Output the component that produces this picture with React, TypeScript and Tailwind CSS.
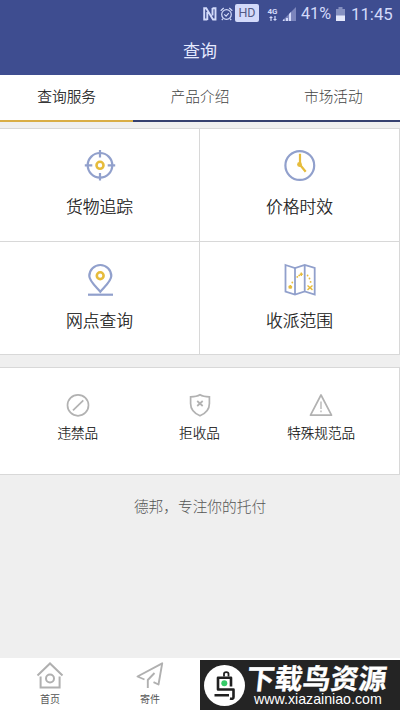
import type { ReactNode } from "react";

// Ícones desenhados à mão, todos com 1 unidade = 1px.
function TargetIcon() {
  return (
    <svg className="w-8 h-[34px]" viewBox="0 0 32 34" fill="none">
      <circle cx="16" cy="16.3" r="12.3" stroke="#91a0cc" strokeWidth="2.2" />
      <path d="M16 1v7.500M16 24v7.500M.8 16.300h7.500M23.700 16.300h7.500" stroke="#91a0cc" strokeWidth="2.200" />
      <circle cx="16" cy="16.3" r="3.5" stroke="#e6bc3c" strokeWidth="2.6" />
    </svg>
  );
}

function ClockIcon() {
  return (
    <svg className="w-8 h-[34px]" viewBox="0 0 32 34" fill="none">
      <circle cx="15.8" cy="16.5" r="14.4" stroke="#91a0cc" strokeWidth="2.200" />
      <path d="M16 4.800v11l5.700 7" stroke="#e6bc3c" strokeWidth="2.200" />
      <circle cx="15.500" cy="15.500" r="2.400" fill="#e6bc3c" />
    </svg>
  );
}

function PinIcon() {
  return (
    <svg className="w-8 h-[34px]" viewBox="0 0 32 34" fill="none">
      <path
        d="M16.300 28.700C12 23.700 5.300 18 5.300 13a11 11 0 0 1 22 0c0 5-6.700 10.700-11 15.700Z"
        stroke="#91a0cc"
        strokeWidth="2.200"
      />
      <circle cx="16.200" cy="12.700" r="3.400" stroke="#e6bc3c" strokeWidth="2.600" />
      <path d="M4 31.700h25" stroke="#91a0cc" strokeWidth="2.200" />
    </svg>
  );
}

function MapIcon() {
  return (
    <svg className="w-8 h-[34px]" viewBox="0 0 32 34" fill="none">
      <path
        d="M1.500 2 11 5l9.700-3 10 3v26.500l-10-3-9.700 3-9.500-3ZM11 5v26.500M20.700 2v26.500"
        stroke="#91a0cc"
        strokeWidth="1.800"
      />
      <path
        d="M6.300 22v3.800M4.600 23.100l3.400 2M8 23.100l-3.400 2M23.500 22.500l5 4.400M28.500 22.500l-5 4.400M17.300 9.500v3.400M15.800 11.200h3"
        stroke="#e6bc3c"
        strokeWidth="1.400"
      />
      <path
        d="M8.300 19.500v.1M13.300 13.800v.1M15.200 12.300v.1M23.600 12.500v.1M25.500 15.500v.1M26.600 18.800v.1"
        stroke="#e6bc3c"
        strokeWidth="1.800"
        strokeLinecap="round"
      />
    </svg>
  );
}

function ForbidIcon() {
  return (
    <svg className="w-6 h-6" viewBox="0 0 24 24" fill="none" stroke="#b2b2b2" strokeWidth="1.700">
      <circle cx="12" cy="12.300" r="10.500" />
      <path d="M7 17.300 17.300 7.300" />
    </svg>
  );
}

function ShieldIcon() {
  return (
    <svg className="w-6 h-6" viewBox="0 0 24 24" fill="none" stroke="#b2b2b2" strokeWidth="1.700">
      <path d="M12 1.700c3 1.800 6 2 9.400 2.100v6.800c0 6-4 10-9.400 12.200C6.600 20.600 2.600 16.600 2.600 10.600V3.800C6 3.700 9 3.500 12 1.700Z" />
      <path d="m9.200 8 5.500 5M14.700 8l-5.500 5" />
    </svg>
  );
}

function WarnIcon() {
  return (
    <svg className="w-6 h-6" viewBox="0 0 24 24" fill="none" stroke="#b2b2b2" strokeWidth="1.700" strokeLinejoin="round">
      <path d="M12 2 22.500 22.200h-21Z" />
      <path d="M12 8.500v7.500M12 17.500v1.800" strokeWidth="1.300" />
    </svg>
  );
}

function HomeIcon() {
  return (
    <svg className="w-7 h-7" viewBox="0 0 28 28" fill="none" stroke="#b0b0b0" strokeWidth="2">
      <path d="m1.500 14.500 12.500-12 12.500 12M4.600 15.500v11h19v-11" />
      <circle cx="14" cy="17.500" r="4" />
    </svg>
  );
}

function SendIcon() {
  return (
    <svg className="w-7 h-7" viewBox="0 0 28 28" fill="none" stroke="#b0b0b0" strokeWidth="1.900" strokeLinejoin="round">
      <path d="M8.500 18.500 1.500 15.500 26.200 2.300 22.500 23.500 17.500 21.200M18.500 12 11.800 19v8" />
    </svg>
  );
}

const TABS = ["查询服务", "产品介绍", "市场活动"];

const SERVICES: { label: string; icon: ReactNode }[] = [
  { label: "货物追踪", icon: <TargetIcon /> },
  { label: "价格时效", icon: <ClockIcon /> },
  { label: "网点查询", icon: <PinIcon /> },
  { label: "收派范围", icon: <MapIcon /> },
];

const RULES: { label: string; icon: ReactNode }[] = [
  { label: "违禁品", icon: <ForbidIcon /> },
  { label: "拒收品", icon: <ShieldIcon /> },
  { label: "特殊规范品", icon: <WarnIcon /> },
];

function StatusBar() {
  return (
    <div className="flex h-7 items-center justify-end pr-[7px] font-[Roboto,sans-serif] text-[#d3dafa]">
      <svg className="w-[14px] h-[14px]" viewBox="0 0 14 14" fill="none" stroke="currentColor" strokeWidth="1.900">
        <path d="M4.300 12.500H1.200V1.200h2L10 12.500h2.500V1.200H9.500M4.300 5v8M9.500 1v7.500" />
      </svg>
      <svg className="ml-[3px] w-[13px] h-[14px]" viewBox="0 0 13 14" fill="none" stroke="currentColor" strokeWidth="1.200">
        <circle cx="6.500" cy="7.500" r="4.800" />
        <path d="M.7 3.700 3.700 1M12.300 3.700l-3-2.700M4.300 7.300l1.800 1.800 2.700-3M3 11.700 1.800 13M10 11.700l1.200 1.300" />
      </svg>
      <span className="ml-[2px] mt-[-2px] flex h-[18px] w-[24px] items-center justify-center rounded-[2px] bg-[#d3dafa] text-[12.500px] text-[#535a84]">
        HD
      </span>
      <div className="ml-2 flex w-[11px] flex-col items-center">
        <span className="text-[8px] font-bold leading-[8px]">4G</span>
        <svg className="w-2 h-[5px]" viewBox="0 0 8 5" fill="currentColor">
          <path d="M2 0 4 2H2.600v3H1.400V2H0ZM6 5 4 3h1.400V0h1.200v3H8Z" />
        </svg>
      </div>
      <svg className="ml-1 w-[14px] h-[14px]" viewBox="0 0 14 14">
        <path d="M0 14 14 0v14Z" fill="#7b85bc" />
        <path d="M1 14v-1.500h1.500V14ZM4 14v-3h2v3ZM7 14V7l2-2v9Z" fill="currentColor" />
      </svg>
      <span className="ml-[5px] w-[32px] whitespace-nowrap text-[16.200px] leading-none">41%</span>
      <svg className="ml-[3px] w-[9px] h-[14px]" viewBox="0 0 9 14">
        <path d="M2.500 0h4v2H9v12H0V2h2.500Z" fill="#8590c0" />
        <path d="M0 8.500h9V14H0Z" fill="#e4e8fb" />
      </svg>
      <span className="ml-[6px] w-[42px] whitespace-nowrap text-[16.800px] leading-none">11:45</span>
    </div>
  );
}

function SiteBadge() {
  return (
    <div className="absolute bottom-[1px] right-0 flex h-[50px] w-[200px] items-center bg-[#242424] pl-1">
      <svg className="h-[41px] w-[41px] shrink-0" viewBox="0 0 41 41" fill="none">
        <circle cx="20.500" cy="20.500" r="20.500" fill="#fff" />
        <path d="M20 11.500V8.800c0-2.200 4.500-2.200 4.500 0v2.700" stroke="#202020" strokeWidth="1.800" />
        <path
          d="M27 21.500v-8.700H14v11.700h15.500v7.500c0 1.500-1 2.200-3.500 1.500M10.500 30.300h14.500"
          stroke="#202020"
          strokeWidth="2.600"
          strokeLinejoin="round"
        />
        <circle cx="20.300" cy="18.200" r="3" fill="#36cb68" />
      </svg>
      <div className="flex flex-col text-white">
        <span className="ml-[2px] -skew-x-6 whitespace-nowrap text-[28px] font-bold leading-[29px] [-webkit-text-stroke:0.300px_#fff]">
          下载鸟资源
        </span>
        <span className="ml-[9px] whitespace-nowrap font-['Liberation_Sans',sans-serif] text-[14.200px] leading-[15px]">
          www.xiazainiao.com
        </span>
      </div>
    </div>
  );
}

export default function App() {
  return (
    <div className="relative flex h-[711px] w-[400px] flex-col overflow-hidden bg-[#efefef] font-['Noto_Sans_CJK_SC',sans-serif] text-[#222]">
      <header className="h-[75px] bg-[#3e4d90]">
        <StatusBar />
        <h1 className="text-center text-[17px] leading-[43px] text-[#e6eaff]">查询</h1>
      </header>

      <nav className="grid h-[47px] grid-cols-3 bg-white">
        {TABS.map((tab, i) => (
          <span
            key={tab}
            className={`border-b-2 text-center text-[14.700px] font-light leading-[42px] ${
              i === 0 ? "border-[#d9ad45] text-[#111] [-webkit-text-stroke:0.150px]" : "border-[#35406f] text-[#444]"
            }`}
          >
            {tab}
          </span>
        ))}
      </nav>

      <section className="mt-[6px] grid grid-cols-2 border-t border-[#d8d8d8]">
        {SERVICES.map((s) => (
          <div key={s.label} className="flex h-[113px] flex-col items-center border-b border-r border-[#d8d8d8] bg-white pt-5 nth-[n+3]:pt-[21px]">
            {s.icon}
            <span className="mt-[11px] text-[16.800px] font-light leading-6 text-[#111] [-webkit-text-stroke:0.200px]">{s.label}</span>
          </div>
        ))}
      </section>

      <section className="mt-3 flex h-[108px] border-y border-r border-[#d8d8d8] bg-white px-[17px] pt-[25px]">
        {RULES.map((r) => (
          <div key={r.label} className="flex flex-1 flex-col items-center">
            {r.icon}
            <span className="mt-[5px] text-[13.600px] font-light leading-5 text-[#111] [-webkit-text-stroke:0.150px]">{r.label}</span>
          </div>
        ))}
      </section>

      <p className="mt-[21px] text-center text-[14.700px] font-light leading-5 text-[#555]">德邦，专注你的托付</p>

      <footer className="mt-auto grid h-[53px] grid-cols-4 bg-white pt-[3px] text-[10px] text-[#555]">
        <div className="flex flex-col items-center">
          <HomeIcon />
          <span className="mt-[3px] leading-[14px]">首页</span>
        </div>
        <div className="flex flex-col items-center">
          <SendIcon />
          <span className="mt-[3px] leading-[14px]">寄件</span>
        </div>
      </footer>

      <SiteBadge />
    </div>
  );
}
